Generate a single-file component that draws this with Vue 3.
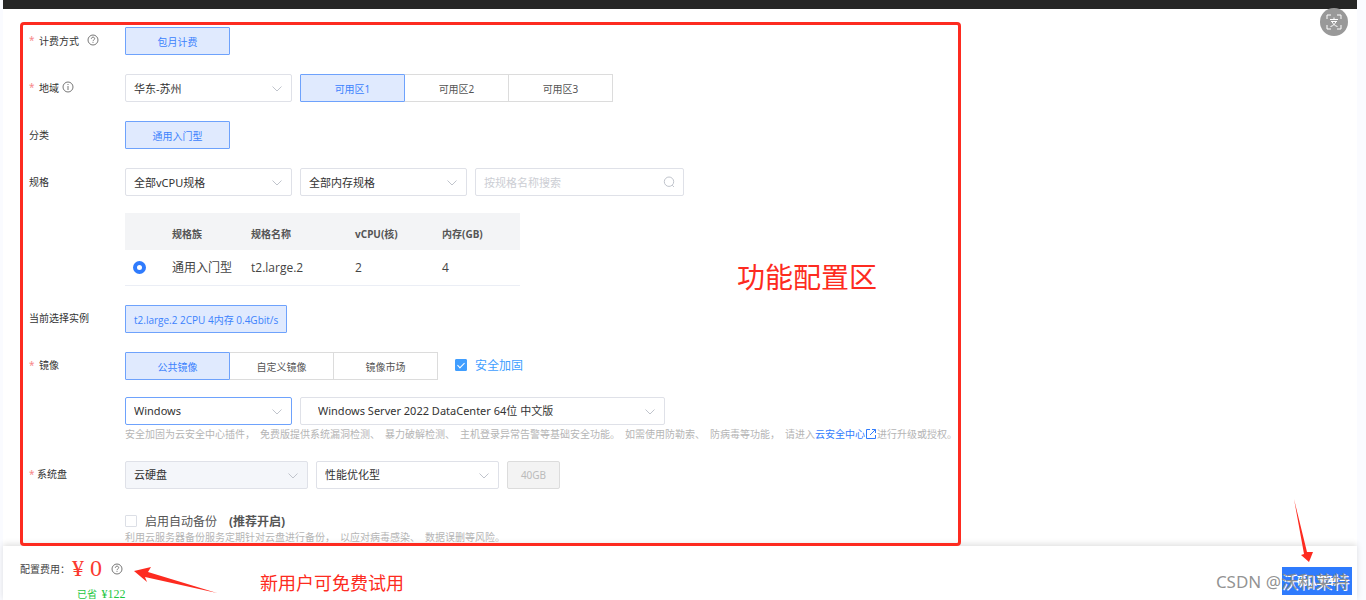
<script setup>
import { ref } from 'vue'

const zones = ['可用区1', '可用区2', '可用区3']
const zone = ref('可用区1')
const images = ['公共镜像', '自定义镜像', '镜像市场']
const image = ref('公共镜像')
const spec = ref('t2.large.2')
const keyword = ref('')
const hardened = ref(true)
const backup = ref(false)
const hints = [
  '安全加固为云安全中心插件，',
  '免费版提供系统漏洞检测、',
  '暴力破解检测、',
  '主机登录异常告警等基础安全功能。',
  '如需使用防勒索、',
  '防病毒等功能，',
]
</script>

<template>
  <div class="page">
    <header class="topbar"></header>
    <main class="main">
      <form class="panel" @submit.prevent>
        <div class="row">
          <span class="label"><i class="star">*</i>计费方式
            <svg class="tip far" viewBox="0 0 12 12"><circle cx="6" cy="6" r="5" /><path d="M4.3 4.8C4.3 2.6 7.7 2.6 7.7 4.7C7.7 5.8 6 5.9 6 7.2M6 8.2V9" /></svg>
          </span>
          <button type="button" class="choice on">包月计费</button>
        </div>

        <div class="row">
          <label class="label" for="region"><i class="star">*</i>地域
            <svg class="tip" viewBox="0 0 12 12"><circle cx="6" cy="6" r="5" /><path d="M6 3V4M6 5V9" /></svg>
          </label>
          <div class="controls">
            <span class="select w167">
              <select id="region"><option>华东-苏州</option></select>
              <svg class="chev" viewBox="0 0 10 6"><path d="M0.5 0.5L5 5L9.5 0.5" /></svg>
            </span>
            <div class="group">
              <button v-for="z in zones" :key="z" type="button" class="choice" :class="{ on: z === zone }" @click="zone = z">{{ z }}</button>
            </div>
          </div>
        </div>

        <div class="row">
          <span class="label">分类</span>
          <button type="button" class="choice on">通用入门型</button>
        </div>

        <div class="row">
          <label class="label" for="cpu">规格</label>
          <div>
            <div class="controls">
              <span class="select w167">
                <select id="cpu"><option>全部vCPU规格</option></select>
                <svg class="chev" viewBox="0 0 10 6"><path d="M0.5 0.5L5 5L9.5 0.5" /></svg>
              </span>
              <span class="select w167">
                <select aria-label="内存规格"><option>全部内存规格</option></select>
                <svg class="chev" viewBox="0 0 10 6"><path d="M0.5 0.5L5 5L9.5 0.5" /></svg>
              </span>
              <span class="search">
                <input v-model="keyword" type="text" aria-label="规格名称" placeholder="按规格名称搜索" />
                <svg class="lens" viewBox="0 0 12 12"><circle cx="6" cy="5.7" r="4.7" /><path d="M9.2 9.2L11 11" /></svg>
              </span>
            </div>
            <table class="specs">
              <thead>
                <tr><th class="c0"></th><th class="c1">规格族</th><th class="c2">规格名称</th><th class="c3">vCPU(核)</th><th>内存(GB)</th></tr>
              </thead>
              <tbody>
                <tr>
                  <td><input v-model="spec" type="radio" name="spec" value="t2.large.2" aria-label="t2.large.2" /></td>
                  <td>通用入门型</td><td>t2.large.2</td><td>2</td><td>4</td>
                </tr>
              </tbody>
            </table>
          </div>
        </div>

        <div class="row">
          <span class="label">当前选择实例</span>
          <button type="button" class="choice on wide">t2.large.2 2CPU 4内存 0.4Gbit/s</button>
        </div>

        <div class="row">
          <span class="label"><i class="star">*</i>镜像</span>
          <div class="image">
            <div class="controls">
              <div class="group">
                <button v-for="i in images" :key="i" type="button" class="choice" :class="{ on: i === image }" @click="image = i">{{ i }}</button>
              </div>
              <label class="check blue"><input v-model="hardened" type="checkbox" />安全加固</label>
            </div>
            <div class="controls second">
              <span class="select w167 focus">
                <select aria-label="操作系统"><option>Windows</option></select>
                <svg class="chev" viewBox="0 0 10 6"><path d="M0.5 0.5L5 5L9.5 0.5" /></svg>
              </span>
              <span class="select w365">
                <select aria-label="系统版本"><option>Windows Server 2022 DataCenter 64位 中文版</option></select>
                <svg class="chev" viewBox="0 0 10 6"><path d="M0.5 0.5L5 5L9.5 0.5" /></svg>
              </span>
            </div>
            <p class="hint"><span v-for="h in hints" :key="h" class="clause">{{ h }}</span>请进入<a href="#">云安全中心<svg class="ext" viewBox="0 0 12 12"><path d="M5 1.5H1.5V10.5H10.5V7M7 1.5H10.5V5M10.5 1.5L5 7" /></svg></a>进行升级或授权。</p>
          </div>
        </div>

        <div class="row">
          <label class="label" for="disk"><i class="star near">*</i>系统盘</label>
          <div>
            <div class="controls">
              <span class="select w183 off">
                <select id="disk" disabled><option>云硬盘</option></select>
                <svg class="chev" viewBox="0 0 10 6"><path d="M0.5 0.5L5 5L9.5 0.5" /></svg>
              </span>
              <span class="select w183">
                <select aria-label="硬盘类型"><option>性能优化型</option></select>
                <svg class="chev" viewBox="0 0 10 6"><path d="M0.5 0.5L5 5L9.5 0.5" /></svg>
              </span>
              <button type="button" class="size" disabled>40GB</button>
            </div>
            <label class="check backup"><input v-model="backup" type="checkbox" />启用自动备份<b>(推荐开启)</b></label>
            <p class="hint low"><span class="clause">利用云服务器备份服务定期针对云盘进行备份，</span><span class="clause">以应对病毒感染、</span>数据误删等风险。</p>
          </div>
        </div>

        <strong class="note zone-note">功能配置区</strong>
      </form>
    </main>

    <footer class="footer">
      <div class="cost">
        <div class="price"><span>配置费用：</span><em>¥ 0</em>
          <svg class="tip" viewBox="0 0 12 12"><circle cx="6" cy="6" r="5" /><path d="M4.3 4.8C4.3 2.6 7.7 2.6 7.7 4.7C7.7 5.8 6 5.9 6 7.2M6 8.2V9" /></svg>
        </div>
        <div class="saved">已省 <span>¥122</span></div>
      </div>
      <svg class="arrow-left" viewBox="0 0 84 28"><path d="M0 4L17 0L14 5L83 26L11 10L13 15Z" /></svg>
      <strong class="note trial">新用户可免费试用</strong>
      <button type="button" class="submit">确认下单</button>
      <svg class="arrow-down" viewBox="0 0 20 64"><path d="M0 0L13 53L19 53L15 63L7 56L10 55Z" /></svg>
      <span class="mark">CSDN @沃和莱特</span>
    </footer>

    <button type="button" class="scan" aria-label="识别文字">
      <svg viewBox="0 0 16 16"><path d="M1 5V1H5M11 1H15V5M15 11V15H11M5 15H1V11M4 5.5H12M8 3.5V5.5M5 7.5H11M6 7.5C7 10 9 12 11.5 12.5M10 7.5C9 10 7 12 4.5 12.5" /></svg>
    </button>
  </div>
</template>

<style>
body { margin: 0; background: #fafbff; }
</style>

<style scoped>
* { box-sizing: border-box; }
.page {
  position: relative;
  display: flex;
  flex-direction: column;
  min-height: 100vh;
  margin: 0 9px 0 3px;
  background: #fff;
  color: #444;
  font-family: "Noto Sans", "Noto Sans CJK SC", sans-serif;
  font-size: 10px;
}
button, input, select { font-family: inherit; font-size: inherit; margin: 0; }
svg { fill: none; stroke: currentColor; flex: none; }
.topbar { height: 9px; background: #262626; }
.main { flex: 1; padding: 13px 17px 0; }
.panel {
  position: relative;
  z-index: 1;
  max-width: 941px;
  padding: 2px 0 0 6px;
  border: 3px solid #fd2b20;
  border-radius: 4px;
}
.row { display: grid; grid-template-columns: 96px 1fr; justify-items: start; margin-bottom: 19px; }
.row:last-of-type { margin-bottom: 0; }
.label { display: flex; align-items: center; height: 26px; white-space: nowrap; color: #333; }
.star { width: 10px; color: #f78989; font-style: normal; }
.star.near { width: 8px; }
.tip { width: 12px; height: 12px; margin-left: 3px; color: #777; }
.tip.far { margin-left: 8px; }
.controls { display: flex; gap: 8px; }
.choice {
  min-width: 105px;
  height: 28px;
  padding: 1px 8px 0;
  border: 1px solid #dcdcdc;
  background: #fff;
  color: #555;
}
.choice.on { position: relative; border-color: #6ea2fc; background: #e0eafe; color: #3c82fd; border-radius: 1px; }
.choice.wide { min-width: 161px; font-family: "Open Sans", "Noto Sans CJK SC", sans-serif; }
.group { display: flex; }
.group .choice + .choice { margin-left: -1px; }
.select, .search { position: relative; display: flex; height: 28px; }
.w167 { width: 167px; }
.w183 { width: 183px; }
.w365 { width: 365px; }
.select select, .search input {
  width: 100%;
  padding: 0 8px;
  border: 1px solid #dfe1e8;
  border-radius: 2px;
  background: #fff;
  color: #333;
  font-size: 11px;
  appearance: none;
  opacity: 1;
}
.w365 select { padding: 0 17px; }
.focus select { border-color: #6ea2fc; }
.off select { background: #f4f6fa; }
.search { width: 209px; }
.search input::placeholder { color: #ccced4; opacity: 1; }
.chev { position: absolute; right: 10px; top: 12px; width: 10px; height: 6px; color: #c0c4cc; }
.lens { position: absolute; right: 9px; top: 8px; width: 12px; height: 12px; color: #c0c4cc; }
.specs { width: 395px; margin-top: 17px; border-collapse: collapse; table-layout: fixed; text-align: left; }
.specs th { height: 37px; padding: 4px 0 0; background: #f3f4f6; color: #555; }
.specs td { height: 35px; padding: 0; border-bottom: 1px solid #ebeef5; color: #444; font-family: "Open Sans", "Noto Sans CJK SC", sans-serif; font-size: 12px; }
.specs + * { margin-top: 0; }
.c0 { width: 47px; }
.c1 { width: 79px; }
.c2 { width: 104px; }
.c3 { width: 87px; }
.specs input {
  display: block;
  width: 13px;
  height: 13px;
  margin-left: 8px;
  border: 4px solid #2f7bfd;
  border-radius: 50%;
  background: #fff;
  appearance: none;
}
.check { display: flex; align-items: center; font-size: 12px; }
.check input {
  position: relative;
  width: 12px;
  height: 12px;
  margin-right: 8px;
  border: 1px solid #dcdfe6;
  border-radius: 1px;
  background: #fff;
  appearance: none;
}
.check input:checked { border-color: #409eff; background: #409eff; }
.check input:checked::after {
  content: "";
  position: absolute;
  left: 3px;
  top: 1px;
  width: 3px;
  height: 6px;
  border: solid #fff;
  border-width: 0 1px 1px 0;
  transform: rotate(45deg);
}
.blue { height: 26px; margin-left: 9px; color: #409eff; }
.second { margin-top: 17px; }
.hint { margin: 0 0 -1px; height: 18px; line-height: 18px; color: #b5b5b5; white-space: nowrap; }
.clause { margin-right: 5px; }
.hint a { color: #2f7bfd; text-decoration: none; }
.ext { width: 12px; height: 12px; vertical-align: -2px; }
.hint.low { height: 12px; line-height: 12px; margin: 0; }
.size { width: 53px; border: 1px solid #dcdcdc; border-radius: 2px; background: #f3f3f3; color: #bbb; }
.backup { height: 20px; margin-top: 22px; color: #555; }
.backup b { margin-left: 12px; }
.note { color: #fd2b20; font-weight: 400; white-space: nowrap; }
.zone-note { position: absolute; left: 714px; top: 232px; font-size: 28px; line-height: 40px; }
.footer {
  position: relative;
  display: flex;
  height: 55px;
  padding: 0 5px 0 17px;
  background: #fff;
  box-shadow: 0 -2px 6px rgba(0, 0, 0, 0.12);
}
.price { display: flex; align-items: center; height: 46px; }
.price em { margin-right: 6px; margin-left: 2px; color: #fb3a30; font: 24px "Liberation Serif", serif; }
.cost { width: 240px; }
.saved { height: 14px; margin: -5px 0 0 57px; line-height: 14px; color: #1ec63f; }
.saved span { margin-left: 2px; font: 12px/14px "Liberation Serif", serif; }
.trial { font-size: 18px; line-height: 26px; margin-top: 24px; }
.submit { width: 70px; height: 28px; margin: 21px 0 0 auto; border: 0; background: #2f7bfd; color: #fff; font-weight: 700; }
.arrow-left { position: absolute; left: 131px; top: 21px; width: 84px; height: 28px; fill: #fd2b20; stroke: none; }
.arrow-down { position: absolute; right: 43px; top: -47px; width: 20px; height: 64px; fill: #fd2b20; stroke: none; }
.mark {
  position: absolute;
  right: 8px;
  top: 24px;
  color: rgba(140, 140, 140, 0.95);
  font-size: 17px;
  line-height: 24px;
  text-shadow: 1px 1px 0 #fff;
}
.scan {
  position: absolute;
  right: 9px;
  top: 8px;
  display: grid;
  place-items: center;
  width: 28px;
  height: 28px;
  padding: 0;
  border: 0;
  border-radius: 50%;
  background: #999;
  color: #fff;
}
.scan svg { width: 16px; height: 16px; }
</style>
